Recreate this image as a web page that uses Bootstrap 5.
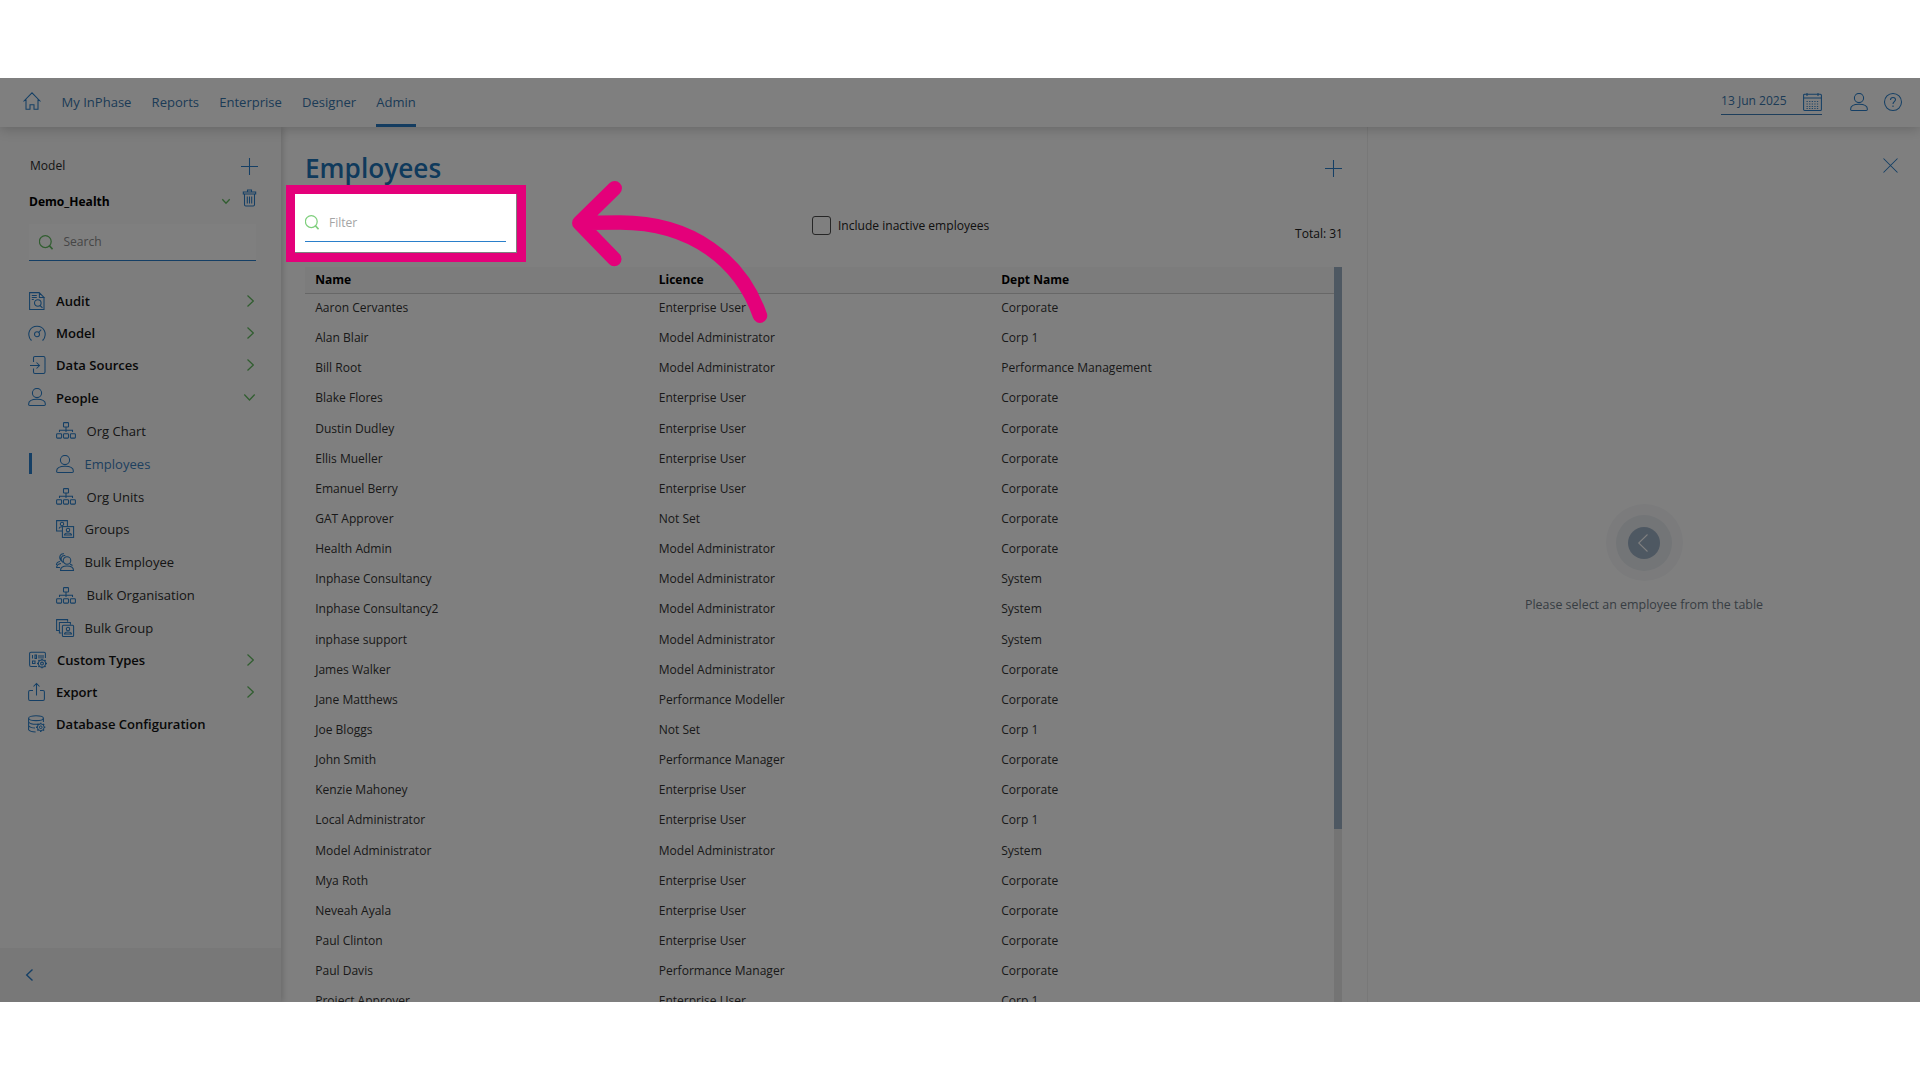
<!DOCTYPE html>
<html lang="en">
<head>
<meta charset="utf-8">
<title>Employees</title>
<link rel="stylesheet" href="https://cdn.jsdelivr.net/npm/bootstrap@5.3.0/dist/css/bootstrap.min.css">
<style>
  :root { --ink: #2b2b2b; --blue: #2a7fca; --green: #62bb60; }
  body { font-family: "Open Sans", "Noto Sans", sans-serif; font-size: 12.05px; line-height: 18px; color: #333; background: #fff; height: 1080px; overflow: hidden; padding-top: 78px; }
  .app-frame { height: 924px; background: #fff; }
  svg { fill: none; stroke: var(--blue); stroke-width: 1.05; display: block; flex: none; overflow: visible; }
  svg.green { stroke: var(--green); stroke-width: 1.25; }
  .topbar { height: 49px; padding: 0 18px 0 23px; box-shadow: 0 2px 12px rgba(0,0,0,.2); z-index: 3; background: #fff; }
  .topbar .nav { gap: 20.15px; margin-left: 20.5px; }
  .topbar .nav-link { font-size: 13.05px; color: #3876ad; padding: 0; height: 49px; line-height: 48px; border-bottom: 3px solid transparent; }
  .topbar .nav-link.active { border-color: #2878c0; }
  .date-box { width: 101px; height: 24px; border-bottom: 1.5px solid #3c7cb6; color: #3876ad; }
  .side { width: 281px; background: #fafafa; box-shadow: 2px 0 6px rgba(0,0,0,.17); z-index: 2; padding-top: 25px; }
  .side-inner { padding: 0 25px 0 29px; color: var(--ink); }
  .search-box { height: 37px; background: #fff; border-bottom: 1px solid var(--blue); padding-left: 10px; margin-top: 9px; color: #8c8c8c; }
  .menu { margin-top: 24px; font-size: 13.05px; color: #111; }
  .menu-row { height: 32.15px; margin-left: -1px; padding-right: 2px; font-weight: 600; }
  .menu-row > span { margin-left: 10px; }
  .sub-list { padding-top: .8px; margin-bottom: -.6px; }
  .sub-row { height: 32.87px; padding-left: 27px; color: #2c2c2c; position: relative; }
  .sub-row > span { margin-left: 10.5px; }
  .sub-row.active { color: #3d80bd; }
  .sub-row.active::before { content: ""; position: absolute; left: 0; top: 6px; width: 3px; height: 21px; background: var(--blue); }
  .side-foot { height: 54px; background: #f1f1f1; padding-left: 26px; }
  .list-pane { width: 1087px; padding: 20px 25px 0 24px; border-right: 1px solid #f0f0f0; }
  .page-title { font-size: 26.2px; font-weight: 600; line-height: 38px; padding-top: 2px; color: #1f74b8; }
  .tools { height: 80px; }
  .filter-box { width: 201px; height: 37px; margin-top: 18px; padding-bottom: 1px; border-bottom: 1px solid var(--blue); color: #a5a5a5; }
  .filter-box svg.green { stroke: #7fcf7d; }
  .tick { width: 19px; height: 19px; border: 1.5px solid #4d4d4d; border-radius: 3px; }
  .grid-head { height: 27px; background: #f8f8f8; border-bottom: 1px solid #cfcfcf; font-weight: 700; color: #000; line-height: 26px; }
  .grid-line { height: 30.15px; line-height: 28.6px; color: #333; }
  .grid-head > div, .grid-line > div { padding-left: 10.2px; }
  .c1 { width: 343.5px; } .c2 { width: 342.5px; }
  .scroll-track { width: 8px; background: #e9e9e9; }
  .scroll-thumb { height: 562px; background: #9db0c5; }
  .halo { width: 77px; height: 77px; background: #f6f7f9; margin-top: 331px; }
  .halo-mid { width: 56px; height: 56px; background: #e6eaee; }
  .halo-core { width: 32px; height: 32px; background: #9db0c5; }
  .spot { position: absolute; left: 295px; top: 116px; width: 221px; height: 58px; box-shadow: 0 0 0 2000px rgba(0,0,0,.5); z-index: 5; }
  .spot-edge { position: absolute; left: 286px; top: 106.5px; width: 240px; height: 77px; border: 9.5px solid #e4007a; z-index: 6; }
  .arrow { position: absolute; left: 560px; top: 90px; z-index: 6; stroke: #e4007a; stroke-width: 14.5; stroke-linecap: round; stroke-linejoin: round; }
</style>
</head>
<body>
<svg width="0" height="0" class="position-absolute">
  <symbol id="user" viewBox="0 0 18 18"><circle cx="9" cy="5" r="4.6"/><path d="M.6 16.2c0-3.400 3.400-5 8.400-5s8.400 1.600 8.400 5q0 1.200-1.200 1.200H1.800q-1.200 0-1.200-1.200z"/></symbol>
  <symbol id="org" viewBox="0 0 20 17"><rect x="7.500" y=".6" width="5" height="4.400" rx=".6"/><rect x=".6" y="11.700" width="5" height="4.400" rx=".8"/><rect x="7.500" y="11.700" width="5" height="4.400" rx=".8"/><rect x="14.400" y="11.700" width="5" height="4.400" rx=".8"/><path d="M10 5v5M3.500 10V8.300h13V10"/></symbol>
  <symbol id="mag" viewBox="0 0 14 15"><circle cx="6.300" cy="6.600" r="5.900"/><path d="M10.300 10.600l3.300 3.600" stroke-width="1.700"/></symbol>
  <symbol id="right" viewBox="0 0 7 12"><path d="M.5.5L6.300 6 .5 11.500"/></symbol>
  <symbol id="gear" viewBox="0 0 10 10"><circle cx="5" cy="5" r="3.600"/><circle cx="5" cy="5" r="1.400"/><path d="M5 0v1.400M5 8.600V10M0 5h1.400M8.600 5H10M1.500 1.500l1 1M7.500 7.500l1 1M1.500 8.500l1-1M7.500 2.500l1-1" stroke-width="1.500"/></symbol>
</svg>
<div class="app-frame position-relative overflow-hidden d-flex flex-column">
  <header class="topbar d-flex align-items-center flex-shrink-0">
    <svg width="18" height="18" viewBox="0 0 18 18" style="margin-bottom:3px"><path d="M.5 9.500L9 .8l8.500 8.700M3 7.500v9.700h4v-4.400h4v4.400h4V7.500"/></svg>
    <nav class="nav flex-grow-1">
      <a class="nav-link">My InPhase</a><a class="nav-link">Reports</a><a class="nav-link">Enterprise</a><a class="nav-link">Designer</a><a class="nav-link active">Admin</a>
    </nav>
    <div class="date-box d-flex justify-content-between">
      <span style="padding-top:1px">13 Jun 2025</span>
      <svg width="19" height="18" viewBox="0 0 19 18" style="margin-top:2.500px"><rect x=".6" y="1.200" width="17.800" height="16.200" rx="1"/><path d="M.6 5h17.800M4 0v3M15 0v3"/><path d="M3.500 8.500h12M3.500 11h12M3.500 13.500h12M3.500 15.500h12" stroke-width=".9" stroke-dasharray="1.300 1.300"/></svg>
    </div>
    <svg width="18" height="18" style="margin-left:28px;margin-bottom:1px"><use href="#user"/></svg>
    <svg width="18" height="18" viewBox="0 0 18 18" style="margin-left:16px;margin-bottom:1px"><circle cx="9" cy="9" r="8.500"/><path d="M6.500 7c0-3.400 5-3.300 5-.4 0 2-2.500 1.900-2.500 4.300M9 12.500v1.500"/></svg>
  </header>

  <div class="d-flex flex-grow-1" style="min-height:0">
    <aside class="side d-flex flex-column flex-shrink-0">
      <div class="side-inner flex-grow-1">
        <div class="d-flex align-items-center justify-content-between" style="height:28px;padding-left:1px">
          <span>Model</span>
          <svg width="17" height="17" viewBox="0 0 17 17" style="margin-right:-2px"><path d="M8.500 0v17M0 8.500h17"/></svg>
        </div>
        <div class="d-flex align-items-center" style="height:35px;padding-top:8px">
          <span class="fw-bold text-black flex-grow-1">Demo_Health</span>
          <svg class="green" width="8" height="5" viewBox="0 0 8 5" style="margin-right:13px"><path d="M.3.300L4 4.300 7.700.3" stroke-width="1.300"/></svg>
          <svg width="13" height="18" viewBox="0 0 13 18" style="margin-bottom:7px"><path d="M.3 3h12.400v2H.3zM4.500 3V1h4v2M1.500 5v10.700q0 1.300 1.300 1.300h7.400q1.300 0 1.300-1.300V5M4.300 7.500v7M6.500 7.500v7M8.700 7.500v7"/></svg>
        </div>
        <div class="search-box d-flex align-items-center">
          <svg class="green" width="14" height="15"><use href="#mag"/></svg><span style="margin-left:10.500px">Search</span>
        </div>
        <div class="menu">
          <div class="menu-row d-flex align-items-center"><svg width="18" height="18" viewBox="0 0 18 18"><path d="M16 6v11.400H1.600V.6h9.600L16 5.400h-4.600V.6M3.800 3.500h5M3.800 5.500h5M3.800 7.500h2"/><circle cx="9.800" cy="11" r="3.300"/><path d="M12 13.500l2.500 2.300"/></svg><span class="flex-grow-1">Audit</span><svg class="green" width="7" height="12"><use href="#right"/></svg></div>
          <div class="menu-row d-flex align-items-center"><svg width="18" height="18" viewBox="0 0 18 18"><path d="M3 16.200C-2 9.500 2.200 2.200 9 2.200S20 9.500 15 16.200l-.8-.1M3 16.200l.8-.1"/><circle cx="9" cy="10.200" r="2.500"/><path d="M10.600 8.500l2.600-2.800"/></svg><span class="flex-grow-1">Model</span><svg class="green" width="7" height="12"><use href="#right"/></svg></div>
          <div class="menu-row d-flex align-items-center"><svg width="18" height="18" viewBox="0 0 18 18"><path d="M5.500 6V2q0-1.500 1.500-1.500h8.500Q17 .5 17 2v14q0 1.500-1.500 1.500H7q-1.500 0-1.500-1.500v-3.500M2 9.500h9.500M8.500 6.500l3 3-3 3"/></svg><span class="flex-grow-1">Data Sources</span><svg class="green" width="7" height="12"><use href="#right"/></svg></div>
          <div class="menu-row d-flex align-items-center" style="padding-right:1px"><svg width="18" height="18"><use href="#user"/></svg><span class="flex-grow-1" style="padding-top:1px">People</span><svg class="green" width="11" height="7" viewBox="0 0 11 7"><path d="M.3.500l5.200 5.500L10.700.5"/></svg></div>

          <div class="sub-list">
          <div class="sub-row d-flex align-items-center"><svg width="20" height="17"><use href="#org"/></svg><span>Org Chart</span></div>
          <div class="sub-row active d-flex align-items-center"><svg width="18" height="18"><use href="#user"/></svg><span>Employees</span></div>
          <div class="sub-row d-flex align-items-center"><svg width="20" height="17"><use href="#org"/></svg><span>Org Units</span></div>
          <div class="sub-row d-flex align-items-center"><svg width="18" height="18" viewBox="0 0 18 18"><path d="M6 11H.6V.6h10.800V6"/><circle cx="6" cy="4" r="1.700"/><path d="M3 8.500q.5-1.700 3-1.700"/><rect x="6.400" y="6.600" width="11.200" height="10.800"/><circle cx="12" cy="10" r="1.700"/><path d="M8.500 15q0-2 3.500-2t3.500 2z"/></svg><span>Groups</span></div>
          <div class="sub-row d-flex align-items-center"><svg width="18" height="18" viewBox="0 0 18 18"><circle cx="11" cy="7.500" r="3.800"/><path d="M4.500 17.400c0-3 2.500-4.500 6.500-4.500s6.500 1.500 6.500 4.500zM7 9.500C3.500 6 5 2.300 9.300 2.600M5.300 8C2 4 4.500.2 8 .8M5 10.500Q.8 11 .6 14.500h3.500M4 8.500Q.6 9 .4 12M14 11l2.500 1.500"/></svg><span>Bulk Employee</span></div>
          <div class="sub-row d-flex align-items-center"><svg width="20" height="17"><use href="#org"/></svg><span>Bulk Organisation</span></div>
          <div class="sub-row d-flex align-items-center"><svg width="18" height="18" viewBox="0 0 18 18"><path d="M3 11.500H.6V.6h11v2.200M5.500 14H3.400V3.400h11v2.300"/><rect x="6.400" y="6.200" width="11.200" height="11.200" rx="1"/><circle cx="12" cy="10" r="1.700"/><path d="M8.500 15q0-2 3.500-2t3.500 2z"/></svg><span>Bulk Group</span></div>
          </div>

          <div class="menu-row d-flex align-items-center"><svg width="18" height="18" viewBox="0 0 18 18" style="margin-left:1px"><path d="M8 15.500H2Q.6 15.500.6 14V2.500Q.6 1.200 2 1.200h13q1.400 0 1.400 1.300V7M3.500 4v3.500M6 4v3.500h1.500V4zM10 4v3.500M12 4v3.500M14 4v3.500M3.500 10h2.500v2.500H3.500z"/><use href="#gear" x="8" y="7.500" width="10" height="10"/></svg><span class="flex-grow-1">Custom Types</span><svg class="green" width="7" height="12"><use href="#right"/></svg></div>
          <div class="menu-row d-flex align-items-center"><svg width="18" height="18" viewBox="0 0 18 18"><path d="M5 7.500H2Q.6 7.500.6 9v7q0 1.500 1.400 1.500h13q1.400 0 1.400-1.500V9q0-1.500-1.400-1.500h-3M8.500 12.500V.800M5.500 3.500l3-3 3 3"/></svg><span class="flex-grow-1">Export</span><svg class="green" width="7" height="12"><use href="#right"/></svg></div>
          <div class="menu-row d-flex align-items-center"><svg width="18" height="18" viewBox="0 0 18 18"><ellipse cx="8" cy="3.200" rx="7.400" ry="2.400"/><path d="M.6 3.200v11.500q1.500 2 7 2.200M15.400 3.200V7M.6 7q1.500 2.300 7.400 2.300 2 0 3.500-.3M.6 10.800q1.500 2.200 6.400 2.300"/><use href="#gear" x="8" y="7.500" width="9.500" height="9.500"/></svg><span>Database Configuration</span></div>
        </div>
      </div>
      <div class="side-foot d-flex align-items-center"><svg width="7" height="12" viewBox="0 0 7 12"><path d="M6.500.5L.7 6l5.800 5.500" stroke-width="1.400"/></svg></div>
    </aside>

    <main class="list-pane d-flex flex-column flex-shrink-0">
      <div class="d-flex align-items-center justify-content-between flex-shrink-0">
        <h1 class="page-title m-0">Employees</h1>
        <svg width="17" height="17" viewBox="0 0 17 17" style="margin-top:2px"><path d="M8.500 0v17M0 8.500h17"/></svg>
      </div>
      <div class="tools d-flex flex-shrink-0">
        <div class="filter-box d-flex align-items-center"><svg class="green" width="14" height="15"><use href="#mag"/></svg><span style="margin-left:10px">Filter</span></div>
        <div class="d-flex align-items-center flex-grow-1" style="height:77px;padding-left:306px;color:#222"><span class="tick"></span><span style="margin-left:7px">Include inactive employees</span></div>
        <div style="padding-top:38px;color:#222;margin-right:-1px">Total: 31</div>
      </div>
      <div class="d-flex flex-grow-1" style="min-height:0">
        <div class="flex-grow-1 overflow-hidden">
          <div class="grid-head d-flex"><div class="c1">Name</div><div class="c2">Licence</div><div>Dept Name</div></div>
          <div id="rows"></div>
        </div>
        <div class="scroll-track"><div class="scroll-thumb"></div></div>
      </div>
    </main>

    <section class="flex-grow-1 d-flex flex-column align-items-center">
      <div class="align-self-end" style="padding:31px 22.500px 0 0"><svg width="15" height="15" viewBox="0 0 15 15"><path d="M.5.5l14 14M14.500.5L.5 14.500"/></svg></div>
      <div class="halo rounded-circle d-flex align-items-center justify-content-center">
        <div class="halo-mid rounded-circle d-flex align-items-center justify-content-center">
          <div class="halo-core rounded-circle d-flex align-items-center justify-content-center"><svg width="10" height="18" viewBox="0 0 10 18" style="stroke:#fff;margin-right:3px"><path d="M9.500.5L.7 9l8.800 8.500"/></svg></div>
        </div>
      </div>
      <div style="font-size:12.450px;margin-top:14.500px;color:#6f7b86">Please select an employee from the table</div>
    </section>
  </div>

  <div class="spot"></div>
  <div class="spot-edge"></div>
  <svg class="arrow" width="220" height="170" viewBox="560 168 220 170"><path d="M614.700 188.300L579.300 223l35 36M579.300 223C595 222.500 605 222.500 620 222.500 692 222.500 741 261 760 315.700"/></svg>
</div>
<script src="https://cdn.jsdelivr.net/npm/bootstrap@5.3.0/dist/js/bootstrap.bundle.min.js"></script>
<script>
  const E = 'Enterprise User', A = 'Model Administrator', M = 'Performance Manager', C = 'Corporate', S = 'System';
  const people = [
    ['Aaron Cervantes', E, C], ['Alan Blair', A, 'Corp 1'], ['Bill Root', A, 'Performance Management'], ['Blake Flores', E, C],
    ['Dustin Dudley', E, C], ['Ellis Mueller', E, C], ['Emanuel Berry', E, C], ['GAT Approver', 'Not Set', C], ['Health Admin', A, C],
    ['Inphase Consultancy', A, S], ['Inphase Consultancy2', A, S], ['inphase support', A, S], ['James Walker', A, C],
    ['Jane Matthews', 'Performance Modeller', C], ['Joe Bloggs', 'Not Set', 'Corp 1'], ['John Smith', M, C], ['Kenzie Mahoney', E, C],
    ['Local Administrator', E, 'Corp 1'], ['Model Administrator', A, S], ['Mya Roth', E, C], ['Neveah Ayala', E, C],
    ['Paul Clinton', E, C], ['Paul Davis', M, C], ['Project Approver', E, 'Corp 1']
  ];
  document.getElementById('rows').innerHTML = people.map(p =>
    `<div class="grid-line d-flex"><div class="c1">${p[0]}</div><div class="c2">${p[1]}</div><div>${p[2]}</div></div>`).join('');
</script>
</body>
</html>
